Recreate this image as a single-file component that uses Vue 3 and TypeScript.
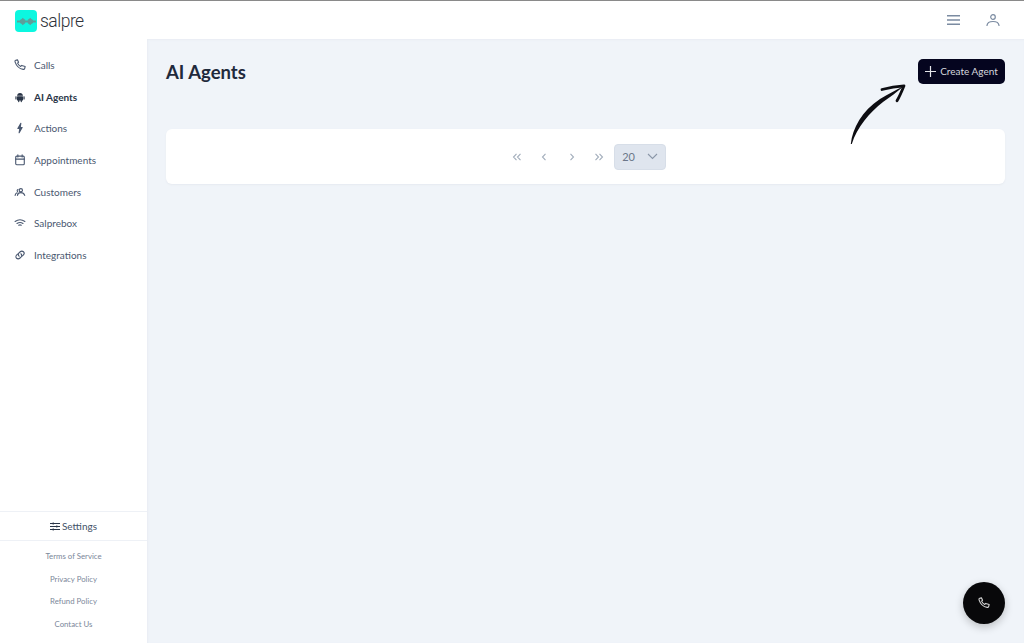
<script setup lang="ts">
// AI Agents page: top bar, side nav, pager card and floating call button.
const navItems = [
  { label: 'Calls', icon: 'phone' },
  { label: 'AI Agents', icon: 'android', active: true },
  { label: 'Actions', icon: 'bolt' },
  { label: 'Appointments', icon: 'calendar' },
  { label: 'Customers', icon: 'people' },
  { label: 'Salprebox', icon: 'wifi' },
  { label: 'Integrations', icon: 'link' },
]

const footerLinks = ['Terms of Service', 'Privacy Policy', 'Refund Policy', 'Contact Us']
</script>

<template>
  <div class="app">
    <header class="topbar">
      <div class="brand">
        <span class="brand-mark">
          <svg width="19" height="9" viewBox="0 0 19 9" fill="#5c9f9a">
            <rect x="0" y="3.500" width="19" height="2" />
            <path d="M3 3 5 1.800 5.500 0.800 8.200 2.800V6.200L5.500 8.200 5 7.200 3 6z" />
            <path d="M16 3 14 1.800 13.500 0.800 10.800 2.800V6.200L13.500 8.200 14 7.200 16 6z" />
          </svg>
        </span>
        <span class="brand-name">salpre</span>
      </div>
      <div class="top-actions">
        <svg width="13" height="10" viewBox="0 0 13 10" fill="none" stroke="#7b8ba1" stroke-width="1.500">
          <path d="M0 .8h13M0 5h13M0 9.200h13" />
        </svg>
        <svg width="14" height="12" viewBox="0 0 14 12" fill="none" stroke="#7b8ba1" stroke-width="1.200" stroke-linecap="round">
          <circle cx="7" cy="3" r="2.300" />
          <path d="M1 11.400c.3-2.500 2.500-3.900 6-3.900s5.700 1.400 6 3.900" />
        </svg>
      </div>
    </header>

    <div class="body">
      <aside class="sidebar">
        <nav class="nav">
          <a v-for="item in navItems" :key="item.label" class="nav-item" :class="{ active: item.active }">
            <svg class="nav-icon" width="12" height="12" viewBox="0 0 14 14" fill="none" stroke="currentColor" stroke-width="1.300" stroke-linecap="round" stroke-linejoin="round">
              <path v-if="item.icon === 'phone'" d="M2 1.500 4 1l1.300 2.800-1.100 1c.6 1.700 1.800 3 3.600 3.900l1.200-1.200L13 8.800l-.5 2.200c-.2.800-1 1.300-1.800 1.100C6.300 11.400 2.700 7.700 1.200 3.300 1 2.500 1.300 1.700 2 1.500z" />
              <g v-else-if="item.icon === 'android'" fill="currentColor" stroke="none">
                <path d="M3.500 5.500C3.700 3.400 5 2.200 7 2.200s3.300 1.200 3.500 3.300z" />
                <rect x="3.500" y="6" width="7" height="5" rx=".6" />
                <rect x="1.600" y="6" width="1.400" height="4" rx=".7" />
                <rect x="11" y="6" width="1.400" height="4" rx=".7" />
                <rect x="4.800" y="10" width="1.400" height="3" rx=".7" />
                <rect x="7.800" y="10" width="1.400" height="3" rx=".7" />
              </g>
              <path v-else-if="item.icon === 'bolt'" fill="currentColor" d="M8 1.500 4.500 7.500h2.300L6 12.500l3.500-6H7.200z" />
              <g v-else-if="item.icon === 'calendar'">
                <rect x="2" y="2.500" width="10" height="10" rx="1.200" />
                <path d="M2 6h10M4.500 1v2.500M9.500 1v2.500" />
              </g>
              <g v-else-if="item.icon === 'people'">
                <circle cx="8" cy="5" r="1.900" />
                <path d="M4 11c.3-2 1.800-3.300 4-3.300s3.800 1.300 4.500 3.300M1.300 11c.2-1.500 1-2.500 2.200-3M4.300 6.600A1.500 1.500 0 0 1 4.700 4" />
              </g>
              <g v-else-if="item.icon === 'wifi'">
                <path d="M1.300 5.200c3.300-2.300 8.100-2.300 11.400 0M3.500 7.500c2.100-1.300 4.900-1.300 7 0M5.500 9.600c1-.6 2-.6 3 0" />
              </g>
              <g v-else>
                <path d="M6 8.400a2.400 2.400 0 0 1-.4-3.500l1.700-1.700a2.600 2.600 0 0 1 3.700 3.700L9.800 8.100" />
                <path d="M8 5.600a2.400 2.400 0 0 1 .4 3.500l-1.700 1.700A2.600 2.600 0 0 1 3 7.100l1.200-1.200" />
              </g>
            </svg>
            <span>{{ item.label }}</span>
          </a>
        </nav>

        <div class="side-footer">
          <div class="settings">
            <svg width="10" height="9" viewBox="0 0 11 9" fill="none" stroke="#2b3648" stroke-width="1.100">
              <path d="M0 1.200h11M0 4.500h11M0 7.800h11M3.500 0v2.400M7.500 3.300v2.400M3.500 6.600V9" />
            </svg>
            <span>Settings</span>
          </div>
          <div class="legal">
            <a v-for="link in footerLinks" :key="link">{{ link }}</a>
          </div>
        </div>
      </aside>

      <main class="main">
        <div class="page-head">
          <h1>AI Agents</h1>
          <button class="create-btn" type="button">
            <svg width="11" height="11" viewBox="0 0 11 11" stroke="#e4e5ea" stroke-width="1.200">
              <path d="M5.500 0v11M0 5.500h11" />
            </svg>
            Create Agent
          </button>
        </div>

        <section class="pager-card">
          <span class="pg-btn"><svg width="10" height="8" viewBox="0 0 10 8"><path d="M4.500 .8 1.500 4l3 3.200M8.500 .8 5.500 4l3 3.200" /></svg></span>
          <span class="pg-btn"><svg width="6" height="8" viewBox="0 0 6 8"><path d="M4.500 .8 1.500 4l3 3.200" /></svg></span>
          <span class="pg-btn"><svg width="6" height="8" viewBox="0 0 6 8"><path d="M1.500 .8 4.500 4l-3 3.200" /></svg></span>
          <span class="pg-btn"><svg width="10" height="8" viewBox="0 0 10 8"><path d="M1.500 .8 4.500 4l-3 3.200M5.500 .8 8.500 4l-3 3.200" /></svg></span>
          <div class="page-size">
            <span>20</span>
            <svg width="11" height="7" viewBox="0 0 11 7" fill="none" stroke="#8b97a8" stroke-width="1.100"><path d="M1 1l4.500 4.500L10 1" /></svg>
          </div>
        </section>

        <!-- hand-drawn pointer on top of the page -->
        <svg class="arrow" width="58" height="64" viewBox="0 0 58 64">
          <path d="M.8 61C2.500 45 12 28 30 16 38 11 46 7 54 3 47 9 40 14 33 19 20 29 7 44 1.800 61z" fill="#0d0d12" />
          <path d="M32 6.500c7-2 14-3.300 22-3.700-2 5-4 10-7 15" fill="none" stroke="#0d0d12" stroke-width="2.800" stroke-linecap="round" stroke-linejoin="round" />
        </svg>

        <button class="call-fab" type="button">
          <svg width="12" height="12" viewBox="0 0 14 14" fill="none" stroke="#d5d5d5" stroke-width="1.300" stroke-linejoin="round">
            <path d="M2 1.500 4 1l1.300 2.800-1.100 1c.6 1.700 1.800 3 3.600 3.900l1.200-1.200L13 8.800l-.5 2.200c-.2.800-1 1.300-1.800 1.100C6.300 11.400 2.700 7.700 1.200 3.300 1 2.500 1.300 1.700 2 1.500z" />
          </svg>
        </button>
      </main>
    </div>
  </div>
</template>

<style scoped>
.app {
  width: 1024px;
  height: 643px;
  display: flex;
  flex-direction: column;
  overflow: hidden;
  border-top: 1px solid #8a8a8a;
  box-sizing: border-box;
  background: #fff;
  font-family: Lato, "Liberation Sans", sans-serif;
  color: #445268;
}

.topbar {
  height: 38px;
  flex-shrink: 0;
  display: flex;
  align-items: center;
  justify-content: space-between;
  padding: 0 25px 0 15px;
}

.brand {
  display: flex;
  align-items: center;
  gap: 3px;
  margin-top: 2px;
}

.brand-mark {
  width: 22px;
  height: 22px;
  border-radius: 4px;
  background: #0cf7e0;
  display: flex;
  align-items: center;
  justify-content: center;
}

.brand-name {
  font-family: Roboto, sans-serif;
  font-size: 17.500px;
  font-weight: 300;
  color: #2f333a;
  letter-spacing: -0.5px;
}

.top-actions {
  display: flex;
  align-items: center;
  gap: 26px;
  transform: translateX(1px);
}

.body {
  flex: 1;
  display: flex;
  min-height: 0;
}

.sidebar {
  width: 147px;
  flex-shrink: 0;
  display: flex;
  flex-direction: column;
  justify-content: space-between;
}

.nav {
  display: flex;
  flex-direction: column;
  padding-top: 10px;
}

.nav-item {
  height: 31.700px;
  display: flex;
  align-items: center;
  gap: 8px;
  padding-left: 14px;
  font-size: 10px;
  color: #4a5870;
}

.nav-icon {
  flex-shrink: 0;
  color: #4a5870;
}

.nav-item.active {
  font-weight: 700;
  color: #2a3547;
}

.nav-item.active .nav-icon {
  color: #2a3547;
}

.settings {
  height: 30px;
  margin-bottom: 1px;
  box-sizing: border-box;
  display: flex;
  align-items: center;
  justify-content: center;
  gap: 2px;
  border-top: 1px solid #eef1f6;
  border-bottom: 1px solid #eef1f6;
  font-size: 10px;
  color: #445268;
}

.legal {
  display: flex;
  flex-direction: column;
  align-items: center;
  gap: 12.500px;
  padding: 9px 0 14.500px;
  font-size: 7.800px;
  line-height: 10px;
  color: #7b8799;
}

.main {
  flex: 1;
  position: relative;
  background: #f0f4f9;
  padding: 0 19px;
  box-shadow: inset 1px 1px 2px #e9edf3;
}

.page-head {
  display: flex;
  justify-content: space-between;
  align-items: flex-start;
  height: 90px;
  padding-top: 20px;
  box-sizing: border-box;
}

.page-head h1 {
  margin: 0;
  font-size: 18.500px;
  line-height: 26px;
  font-weight: 700;
  color: #1f2a3c;
}

.create-btn {
  width: 87px;
  height: 25.500px;
  margin-top: -.5px;
  border: 0;
  border-radius: 5px;
  background: #05051f;
  color: #d6d7de;
  font: 400 10px Lato, sans-serif;
  display: flex;
  align-items: center;
  justify-content: center;
  gap: 4px;
  padding: 0;
}

.pager-card {
  height: 55px;
  background: #fff;
  border-radius: 6px;
  box-shadow: 0 1px 2px #e6eaf0;
  display: flex;
  align-items: center;
  padding-left: 337.500px;
}

.pg-btn {
  width: 27.300px;
  display: flex;
  justify-content: center;
}

.pg-btn svg {
  fill: none;
  stroke: #a2adbb;
  stroke-width: 1.100;
}

.page-size {
  width: 52px;
  height: 26px;
  margin-left: 1.500px;
  border-radius: 4px;
  background: #dfe5ee;
  border: 1px solid #d7dee8;
  box-sizing: border-box;
  display: flex;
  align-items: center;
  justify-content: space-between;
  padding: 0 7px;
  font-size: 11px;
  color: #6b7789;
}

.arrow {
  position: absolute;
  left: 703px;
  top: 44px;
}

.call-fab {
  position: absolute;
  right: 19px;
  bottom: 19px;
  width: 42px;
  height: 42px;
  border: 0;
  border-radius: 50%;
  background: #08080a;
  box-shadow: 0 3px 8px rgba(0, 0, 0, 0.22);
  display: flex;
  align-items: center;
  justify-content: center;
  padding: 0;
}
</style>
